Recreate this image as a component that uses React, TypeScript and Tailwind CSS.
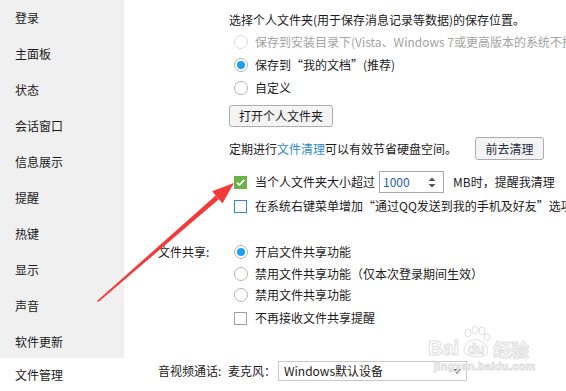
import React from "react";

const FONT = { fontFamily: "'Microsoft YaHei','Noto Sans CJK SC',sans-serif" };

const sideItems = ["登录", "主面板", "状态", "会话窗口", "信息展示", "提醒", "热键", "显示", "声音", "软件更新"];

function Radio({ checked = false, disabled = false }: { checked?: boolean; disabled?: boolean }) {
  return (
    <span
      className={
        "flex h-[14px] w-[14px] shrink-0 items-center justify-center rounded-full border bg-white " +
        (disabled ? "border-[#dcdcdc]" : "border-[#b4b4b4]")
      }
    >
      {checked && <span className="h-[8px] w-[8px] rounded-full bg-[#1ea0f2]" />}
    </span>
  );
}

function Row({ h, mt = "", children }: { h: string; mt?: string; children: React.ReactNode }) {
  return <div className={"flex items-center whitespace-nowrap " + h + " " + mt}>{children}</div>;
}

export default function App() {
  return (
    <div
      className="relative flex h-[391px] w-[566px] overflow-hidden bg-white text-[12px] text-[#1b1b1b]"
      style={FONT}
    >
      {/* Sidebar */}
      <div className="flex w-[124px] shrink-0 flex-col">
        <div className="flex h-[358px] flex-col bg-[#f0f0f0]">
          {sideItems.map((t) => (
            <div key={t} className="flex h-[36px] shrink-0 items-center pl-[15px] text-[12px]">
              {t}
            </div>
          ))}
        </div>
        <div className="flex h-[38px] items-center pl-[15px]">文件管理</div>
      </div>

      {/* Main */}
      <div className="flex flex-col pl-[34px]">
        {/* Section 1 */}
        <div className="flex pt-[9px]">
          <div className="w-[71px] shrink-0" />
          <div className="flex flex-col">
            <Row h="h-[22px]">选择个人文件夹(用于保存消息记录等数据)的保存位置。</Row>
            <Row h="h-[22px]">
              <span className="ml-[5px]"><Radio disabled /></span>
              <span className="ml-[7px] text-[#a3a3a3]">保存到安装目录下(Vista、Windows 7或更高版本的系统不推荐)</span>
            </Row>
            <Row h="h-[23px]">
              <span className="ml-[5px]"><Radio checked /></span>
              <span className="ml-[7px]">保存到“我的文档”(推荐)</span>
            </Row>
            <Row h="h-[23px]">
              <span className="ml-[5px]"><Radio /></span>
              <span className="ml-[7px]">自定义</span>
            </Row>
            <Row h="h-[22px]" mt="mt-[6px]">
              <button className="flex h-[22px] w-[104px] items-center justify-center rounded-[3px] border border-[#adadad] bg-[#f4f4f4] text-[12px] text-[#1b1b1b]">
                打开个人文件夹
              </button>
            </Row>
            <Row h="h-[23px]" mt="mt-[10px]">
              <span>
                定期进行<span className="text-[#2b8ad6]">文件清理</span>可以有效节省硬盘空间。
              </span>
              <button className="ml-[18px] flex h-[23px] w-[69px] items-center justify-center rounded-[3px] border border-[#adadad] bg-[#f4f4f4] text-[12px] text-[#1f2d45]">
                前去清理
              </button>
            </Row>
            <Row h="h-[22px]" mt="mt-[11px]">
              <span className="ml-[5px] flex h-[13px] w-[13px] items-center justify-center bg-[#68b246]">
                <svg width="11" height="11" viewBox="0 0 11 11">
                  <path d="M2 5.6 L4.4 8 L9.2 2.8" fill="none" stroke="#fff" strokeWidth="1.8" />
                </svg>
              </span>
              <span className="ml-[8px]">当个人文件夹大小超过</span>
              <span className="relative ml-[4px] flex h-[22px] w-[65px] items-center border border-[#a9a9a9] bg-white pl-[3px] text-[#1e5cb3]">
                1000
                <svg className="absolute right-[7px] top-[4px]" width="8" height="13" viewBox="0 0 8 13">
                  <path d="M0.5 5 L4 1.5 L7.5 5 Z" fill="#555" />
                  <path d="M0.5 8 L4 11.5 L7.5 8 Z" fill="#555" />
                </svg>
              </span>
              <span className="ml-[9px]">MB时，提醒我清理</span>
            </Row>
            <Row h="h-[24px]" mt="mt-[1px]">
              <span className="ml-[5px] h-[13px] w-[13px] border border-[#2a86de] bg-white" />
              <span className="ml-[8px]">在系统右键菜单增加“通过QQ发送到我的手机及好友”选项</span>
            </Row>
          </div>
        </div>

        {/* Section 2 */}
        <div className="mt-[23px] flex">
          <div className="flex h-[22px] w-[71px] shrink-0 items-center">文件共享:</div>
          <div className="flex flex-col">
            <Row h="h-[22px]">
              <span className="ml-[5px]"><Radio checked /></span>
              <span className="ml-[7px]">开启文件共享功能</span>
            </Row>
            <Row h="h-[21px]">
              <span className="ml-[5px]"><Radio /></span>
              <span className="ml-[7px]">禁用文件共享功能（仅本次登录期间生效）</span>
            </Row>
            <Row h="h-[22px]">
              <span className="ml-[5px]"><Radio /></span>
              <span className="ml-[7px]">禁用文件共享功能</span>
            </Row>
            <Row h="h-[22px]" mt="mt-[1px]">
              <span className="ml-[5px] h-[13px] w-[13px] border border-[#a0a0a0] bg-white" />
              <span className="ml-[8px]">不再接收文件共享提醒</span>
            </Row>
          </div>
        </div>

        {/* Section 3 */}
        <div className="mt-[32px] flex">
          <div className="flex h-[20px] w-[70px] shrink-0 items-center">音视频通话:</div>
          <Row h="h-[20px]">
            <span>麦克风：</span>
            <span className="relative ml-[2px] flex h-[20px] w-[189px] items-center border border-[#c8c8c8] bg-white pl-[5px]">
              Windows默认设备
              <svg className="absolute right-[5px] top-[7px]" width="8" height="6" viewBox="0 0 8 6">
                <path d="M0 0 L8 0 L4 5 Z" fill="#555" />
              </svg>
            </span>
          </Row>
        </div>
      </div>

      {/* Baidu watermark */}
      <div className="pointer-events-none absolute left-[428px] top-[326px] flex flex-col items-start leading-none text-white/60 [-webkit-text-stroke:1px_#e0e0e0]">
        <div className="flex items-end">
          <span className="text-[20px] font-bold" style={{ fontFamily: "Arial, 'Liberation Sans', sans-serif" }}>Bai</span>
          <span className="relative ml-[2px] flex h-[32px] w-[30px] items-end justify-center">
            <svg className="absolute left-[0px] top-[0px]" width="30" height="32" viewBox="0 0 30 32">
              <g fill="none" stroke="#e0e0e0" strokeWidth="1">
                <ellipse cx="7" cy="7" rx="3" ry="4" />
                <ellipse cx="14" cy="4" rx="3" ry="4" />
                <ellipse cx="21" cy="5" rx="3" ry="4" />
                <ellipse cx="26" cy="11" rx="3" ry="3.5" />
                <path d="M3 26 C3 16 12 12 17 14 C24 15 28 22 26 28 C24 32 6 32 3 26 Z" />
              </g>
            </svg>
            <span className="relative mb-[2px] text-[14px] font-bold" style={{ fontFamily: "Arial, 'Liberation Sans', sans-serif" }}>du</span>
          </span>
          <span className="ml-[2px] text-[18px] font-bold">经验</span>
        </div>
        <span className="mt-[3px] pl-[6px] text-[11px] font-bold tracking-[0.3px]" style={{ fontFamily: "Arial, 'Liberation Sans', sans-serif" }}>
          jingyan.baidu.com
        </span>
      </div>

      {/* Red arrow */}
      <svg className="pointer-events-none absolute left-0 top-0" width="566" height="391" viewBox="0 0 566 391">
        <polygon points="97,301 215.7,195.4 218.9,199.2 98.4,302" fill="#f23a3a" />
        <polygon points="234,183 212.1,191.2 222.5,203.4" fill="#f23a3a" />
      </svg>
    </div>
  );
}
